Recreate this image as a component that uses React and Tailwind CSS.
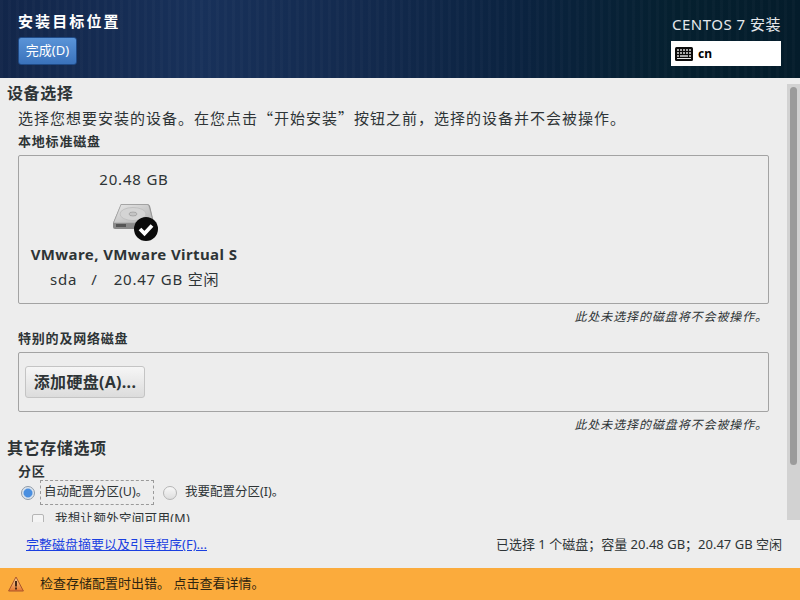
const font = "font-['Noto_Sans','Noto_Sans_CJK_SC',sans-serif]";

const KeyboardIcon = () => (
  <svg width="18" height="14" viewBox="0 0 18 14" className="shrink-0">
    <rect x="0" y="0" width="18" height="14" rx="1.5" fill="#0c0c0c" />
    <g fill="#a8a8a8">
      <rect x="2" y="2" width="2" height="2" />
      <rect x="5" y="2" width="2" height="2" />
      <rect x="8" y="2" width="2" height="2" />
      <rect x="11" y="2" width="2" height="2" />
      <rect x="14" y="2" width="2" height="2" />
      <rect x="2" y="5" width="2" height="2" />
      <rect x="5" y="5" width="2" height="2" />
      <rect x="8" y="5" width="2" height="2" />
      <rect x="11" y="5" width="2" height="2" />
      <rect x="14" y="5" width="2" height="2" />
      <rect x="2" y="8" width="2" height="2" />
      <rect x="5" y="8" width="8" height="2" />
      <rect x="14" y="8" width="2" height="2" />
    </g>
    <rect x="2" y="11" width="14" height="1" fill="#e8e8e8" />
  </svg>
);

const DiskIcon = () => (
  <svg width="48" height="40" viewBox="0 0 48 40">
    <defs>
      <linearGradient id="top" x1="0" y1="0" x2="1" y2="1">
        <stop offset="0" stopColor="#e8e8e8" />
        <stop offset="1" stopColor="#b0b0b0" />
      </linearGradient>
    </defs>
    <path d="M9 1 H35 Q37 1 38 3 L42 20 V24 Q42 26 40 26 H3 Q1 26 1 24 V20 Z" fill="#8a8a8a" />
    <path d="M9 1.5 H35 Q36.5 1.5 37 3 L41.5 20 H1.5 Z" fill="url(#top)" stroke="#9a9a9a" strokeWidth="0.6" />
    <ellipse cx="21" cy="11" rx="13" ry="6.5" fill="#d4d4d4" stroke="#bcbcbc" strokeWidth="0.8" />
    <ellipse cx="21" cy="11" rx="4" ry="2" fill="#c4c4c4" stroke="#929292" strokeWidth="0.6" />
    <rect x="4" y="21" width="10" height="3" fill="#555" />
    <circle cx="34" cy="26" r="12" fill="#0b0b0b" />
    <path d="M28 26 L32.5 30.5 L40 22.5" fill="none" stroke="#fff" strokeWidth="3.8" />
  </svg>
);

const WarningIcon = () => (
  <svg width="16" height="16" viewBox="0 0 16 16" className="shrink-0">
    <defs>
      <linearGradient id="warn" x1="0" y1="0" x2="0" y2="1">
        <stop offset="0" stopColor="#fbd9a0" />
        <stop offset="1" stopColor="#e8762c" />
      </linearGradient>
    </defs>
    <path d="M8 1 L15.4 15 H0.6 Z" fill="url(#warn)" stroke="#a9552a" strokeWidth="1" strokeLinejoin="round" />
    <rect x="7" y="5" width="2" height="5.5" fill="#4a2a18" />
    <rect x="7" y="11.5" width="2" height="2" fill="#4a2a18" />
  </svg>
);

const SectionTitle = ({ children, className }) => (
  <h2 className={`text-[16px] leading-5 font-bold tracking-[0.6px] text-[#2e3436] ${className}`}>{children}</h2>
);

const SubLabel = ({ children, className }) => (
  <div className={`text-[13px] leading-4 font-bold tracking-[0.8px] text-[#2e3436] ${className}`}>{children}</div>
);

const Note = ({ children, className }) => (
  <div className={`text-right pr-[19px] text-[12px] leading-4 italic tracking-[0.9px] text-[#2e3436] ${className}`}>{children}</div>
);

export default function App() {
  return (
    <div className={`flex h-[600px] w-[800px] flex-col overflow-hidden bg-[#ededed] ${font}`}>
      <header className="relative flex h-[78px] shrink-0 justify-between bg-[repeating-linear-gradient(90deg,rgba(255,255,255,0.018)_0_3px,transparent_3px_8px),linear-gradient(90deg,#12264a_0%,#18315a_25%,#132a4e_45%,#0b2340_65%,#05202f_85%,#041c2b_100%)] pl-[18px] pr-[19px] pt-[11px]">
        <div>
          <h1 className="text-[15px] leading-5 font-bold tracking-[2.1px] text-white">安装目标位置</h1>
          <button className="mt-[6px] flex h-[28px] w-[59px] items-center justify-center rounded-[3px] border border-[#1f4a86] bg-[linear-gradient(180deg,#5a94d8,#3a72bb)] text-[13px] text-white">
            完成(D)
          </button>
        </div>
        <div className="flex w-[110px] flex-col items-end">
          <div className="mt-[3px] whitespace-nowrap text-[15px] leading-5 tracking-[0.5px] text-[#e6e9ec]">CENTOS 7 安装</div>
          <div className="mt-[7px] flex h-[25px] w-[110px] items-center gap-[5px] bg-white pl-[4px] text-[12px] font-bold text-black">
            <KeyboardIcon />
            <span>cn</span>
          </div>
        </div>
      </header>

      <div className="relative flex h-[444px] shrink-0">
        <main className="h-full w-[787px] overflow-hidden">
          <SectionTitle className="ml-[7px] mt-[5px]">设备选择</SectionTitle>
          <p className="ml-[18px] mt-[5px] whitespace-nowrap text-[15px] leading-5 tracking-[1px] text-[#2e3436]">
            选择您想要安装的设备。在您点击<span className="font-['Noto_Sans_CJK_SC',sans-serif]">“</span>开始安装<span className="font-['Noto_Sans_CJK_SC',sans-serif]">”</span>按钮之前，选择的设备并不会被操作。
          </p>
          <SubLabel className="ml-[18px] mt-[5px]">本地标准磁盘</SubLabel>
          <div className="ml-[18px] mt-[6px] h-[149px] w-[751px] rounded-[2px] border border-[#a3a3a3] pl-[12px] pt-[13px] text-[#2e3436]">
            <div className="flex w-[206px] flex-col items-center">
              <div className="text-[15px] leading-5 tracking-[0.8px]">20.48 GB</div>
              <div className="mt-[14px] h-[40px] w-[48px] translate-x-[2px]">
                <DiskIcon />
              </div>
              <div className="mt-[1px] text-[15px] leading-5 font-bold tracking-[0.4px] whitespace-nowrap">VMware, VMware Virtual S</div>
              <div className="mt-[5px] flex w-full gap-[14px] pl-[19px] text-[15px] leading-5 tracking-[0.8px] whitespace-nowrap">
                <span>sda</span>
                <span>/</span>
                <span className="ml-[2px]">20.47 GB 空闲</span>
              </div>
            </div>
          </div>
          <Note className="mt-[5px]">此处未选择的磁盘将不会被操作。</Note>
          <SubLabel className="ml-[18px] mt-[5px]">特别的及网络磁盘</SubLabel>
          <div className="ml-[18px] mt-[6px] flex h-[60px] w-[751px] items-center rounded-[2px] border border-[#a3a3a3] pl-[6px]">
            <button className="flex h-[32px] w-[120px] items-center justify-center rounded-[3px] border border-[#c4c4c4] bg-[linear-gradient(180deg,#f6f6f6,#dcdcdc)] text-[16px] font-bold tracking-[0.3px] whitespace-nowrap text-[#2e3436]">
              添加硬盘(A)...
            </button>
          </div>
          <Note className="mt-[5px]">此处未选择的磁盘将不会被操作。</Note>
          <SectionTitle className="ml-[7px] mt-[5px]">其它存储选项</SectionTitle>
          <SubLabel className="ml-[18px] mt-[5px]">分区</SubLabel>
          <div className="ml-[21px] mt-[1px] flex h-[25px] items-center text-[12.5px] text-[#2e3436]">
            <span className="h-[14px] w-[14px] rounded-full border border-[#8d9aa8] bg-[radial-gradient(circle,#4a8fe0_45%,#dfe6ee_60%)]" />
            <span className="ml-[5px] flex h-[25px] w-[114px] items-center border border-dashed border-[#9a9a9a] pl-[3px] whitespace-nowrap">自动配置分区(U)。</span>
            <span className="ml-[9px] h-[14px] w-[14px] rounded-full border border-[#b5b5b5] bg-[linear-gradient(180deg,#f8f8f8,#dedede)]" />
            <span className="ml-[8px]">我要配置分区(I)。</span>
          </div>
          <div className="ml-[32px] mt-[6px] flex items-center text-[12.5px] leading-4 tracking-[0.3px] text-[#2e3436]">
            <span className="h-[11px] w-[12px] rounded-[2px] border border-[#b5b5b5] bg-[#f4f4f4]" />
            <span className="ml-[11px]">我想让额外空间可用(M)</span>
          </div>
        </main>
        <div className="ml-auto mt-[6px] flex h-[436px] w-[13px] justify-center bg-[#d2d2d2] pt-[3px]">
          <div className="h-[378px] w-[7px] rounded-[4px] bg-[#9b9b9b]" />
        </div>
      </div>

      <div className="flex h-[46px] shrink-0 items-center justify-between pl-[26px] pr-[18px] text-[13px] text-[#2e3436]">
        <a href="#" className="text-[#1a3fe0] underline">完整磁盘摘要以及引导程序(F)...</a>
        <span>已选择 1 个磁盘；容量 20.48 GB；20.47 GB 空闲</span>
      </div>

      <div className="flex h-[32px] shrink-0 items-center bg-[#fbab3c] pl-[8px] text-[13px] text-[#2e2410]">
        <WarningIcon />
        <span className="ml-[16px]">检查存储配置时出错。 点击查看详情。</span>
      </div>
    </div>
  );
}
